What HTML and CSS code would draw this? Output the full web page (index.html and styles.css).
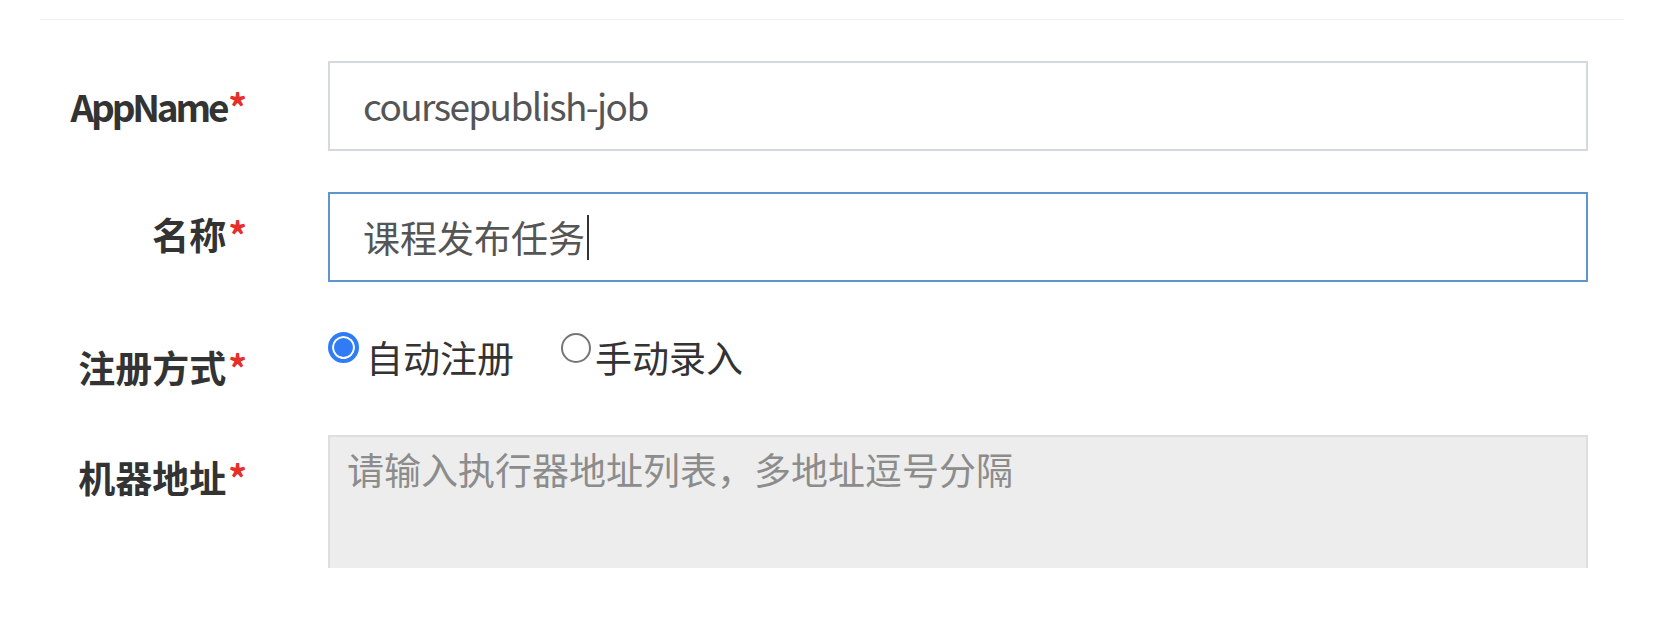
FILE: index.html
```html
<!DOCTYPE html>
<html lang="zh-CN">
<head>
<meta charset="utf-8">
<title>执行器</title>
<link rel="stylesheet" href="styles.css">
</head>
<body>
<div class="divider"></div>
<form class="form">
  <div class="row row-input">
    <label class="label"><span class="latin">AppName</span><span class="req">*</span></label>
    <div class="control">
      <input class="field latin-field" type="text" value="coursepublish-job">
    </div>
  </div>
  <div class="row row-input">
    <label class="label label-cjk">名称<span class="req">*</span></label>
    <div class="control">
      <div class="field field-focus">课程发布任务<span class="caret"></span></div>
    </div>
  </div>
  <div class="row row-radio">
    <label class="label label-offset">注册方式<span class="req">*</span></label>
    <div class="control radios">
      <span class="radio-item"><span class="radio checked"></span><span class="radio-text">自动注册</span></span>
      <span class="radio-item"><span class="radio"></span><span class="radio-text">手动录入</span></span>
    </div>
  </div>
  <div class="row row-area">
    <label class="label label-offset2">机器地址<span class="req">*</span></label>
    <div class="control clip">
      <textarea class="area" readonly placeholder="请输入执行器地址列表，多地址逗号分隔"></textarea>
    </div>
  </div>
</form>
</body>
</html>
```
FILE: styles.css
```css
* { box-sizing: border-box; }
html, body {
  margin: 0;
  background: #fff;
}
body {
  font-family: "Noto Sans CJK SC", "Noto Sans", sans-serif;
  color: #333;
}
.divider {
  height: 1px;
  background: #efefef;
  margin: 19px 37px 0 40px;
}
.form {
  margin-top: 41px;
}
.row {
  display: flex;
  gap: 81px;
}
.row-input {
  align-items: center;
  margin-bottom: 41px;
}
.row-radio {
  align-items: flex-start;
  padding-top: 3px;
  margin-bottom: 42px;
}
.row-area {
  align-items: flex-start;
}
.label {
  width: 247px;
  flex: none;
  text-align: right;
  font-size: 37px;
  font-weight: 700;
  line-height: 52px;
  color: #333;
}
.latin {
  letter-spacing: -3.2px;
}
.label-cjk { padding-bottom: 6px; }
.label-offset { padding-top: 15px; }
.label-offset2 { padding-top: 16px; }
.req {
  color: #e5302a;
  margin-left: 2px;
}
.control {
  width: 1260px;
  flex: none;
}
.field {
  display: flex;
  align-items: center;
  width: 100%;
  height: 90px;
  margin: 0;
  padding: 0 20px 0 33px;
  border: 2px solid #d4d8df;
  background: #fff;
  font-family: "Noto Sans CJK SC", "Noto Sans", sans-serif;
  font-size: 37px;
  color: #555;
  outline: none;
}
.latin-field {
  letter-spacing: -1.6px;
  padding-bottom: 3px;
}
.field-focus {
  border-color: #5c96cb;
}
.caret {
  display: inline-block;
  width: 2px;
  height: 45px;
  margin-left: 2px;
  background: #333;
}
.radios {
  display: flex;
  align-items: flex-start;
  gap: 47px;
  font-size: 37px;
  line-height: 52px;
  color: #333;
}
.radio-item {
  display: flex;
  align-items: flex-start;
}
.radio-text {
  padding-top: 5px;
}
.radio {
  flex: none;
  width: 30px;
  height: 30px;
  margin-top: 7px;
  margin-right: 4px;
  border: 2px solid #767676;
  border-radius: 50%;
  background: #fff;
}
.radio.checked {
  width: 31px;
  height: 31px;
  margin-top: 6px;
  margin-right: 7px;
  border: 4px solid #2f7cf6;
  background: #2f7cf6;
  box-shadow: inset 0 0 0 2px #fff;
}
.clip {
  height: 133px;
  overflow: hidden;
}
.area {
  display: block;
  width: 100%;
  height: 170px;
  margin: 0;
  padding: 6px 17px;
  border: 2px solid #dedede;
  background: #ededed;
  font-family: "Noto Sans CJK SC", "Noto Sans", sans-serif;
  font-size: 37px;
  line-height: 52px;
  color: #555;
  resize: none;
  outline: none;
}
.area::placeholder {
  color: #8c8c8c;
  opacity: 1;
}
```
